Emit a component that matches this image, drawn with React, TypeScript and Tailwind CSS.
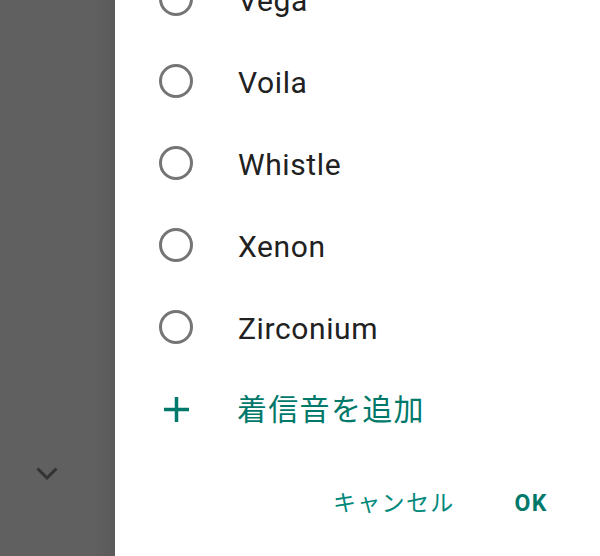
const tones = ["Vega", "Voila", "Whistle", "Xenon", "Zirconium"];

const RadioRow = ({ label }: { label: string }) => {
  return (
    <div className="h-[82px] flex items-center pl-[44px]">
      <div className="w-[34px] h-[34px] rounded-full border-[3px] border-[#757575] shrink-0" />
      <span className="ml-[45px] pt-[3px] text-[30px] tracking-[0.6px] text-[#212121] leading-none">
        {label}
      </span>
    </div>
  );
};

const App = () => {
  return (
    <div
      className="w-[600px] h-[556px] flex overflow-hidden"
      style={{ fontFamily: 'Roboto, "Noto Sans CJK JP", sans-serif' }}
    >
      <div className="w-[115px] h-full bg-gradient-to-r from-[#606060] from-80% to-[#5a5a5a] flex flex-col justify-end items-start pb-[75px] pl-[36px]">
        <svg width="22" height="14" viewBox="0 0 22 14" fill="none">
          <path
            d="M1.5 1.5 L11 11 L20.5 1.5"
            stroke="#333333"
            strokeWidth="3"
          />
        </svg>
      </div>
      <div className="flex-1 h-full bg-white rounded-bl-[3px] flex flex-col">
        <div className="-mt-[42px]">
          {tones.map((t) => (
            <RadioRow key={t} label={t} />
          ))}
          <div className="h-[82px] flex items-center pl-[49px]">
            <svg width="25" height="25" viewBox="0 0 25 25" className="shrink-0">
              <path d="M12.5 0 V25 M0 12.5 H25" stroke="#00796b" strokeWidth="3.5" />
            </svg>
            <span className="ml-[48px] pt-[2px] text-[30px] tracking-[1.3px] text-[#00796b] leading-none">
              着信音を追加
            </span>
          </div>
        </div>
        <div className="mt-[17px] h-[72px] flex items-center justify-end pr-[52px]">
          <span className="text-[23px] tracking-[1.3px] text-[#00897b] leading-none font-normal">
            キャンセル
          </span>
          <span className="ml-[60px] text-[23px] tracking-[1.5px] text-[#00796b] leading-none font-bold">
            OK
          </span>
        </div>
      </div>
    </div>
  );
};

export default App;
